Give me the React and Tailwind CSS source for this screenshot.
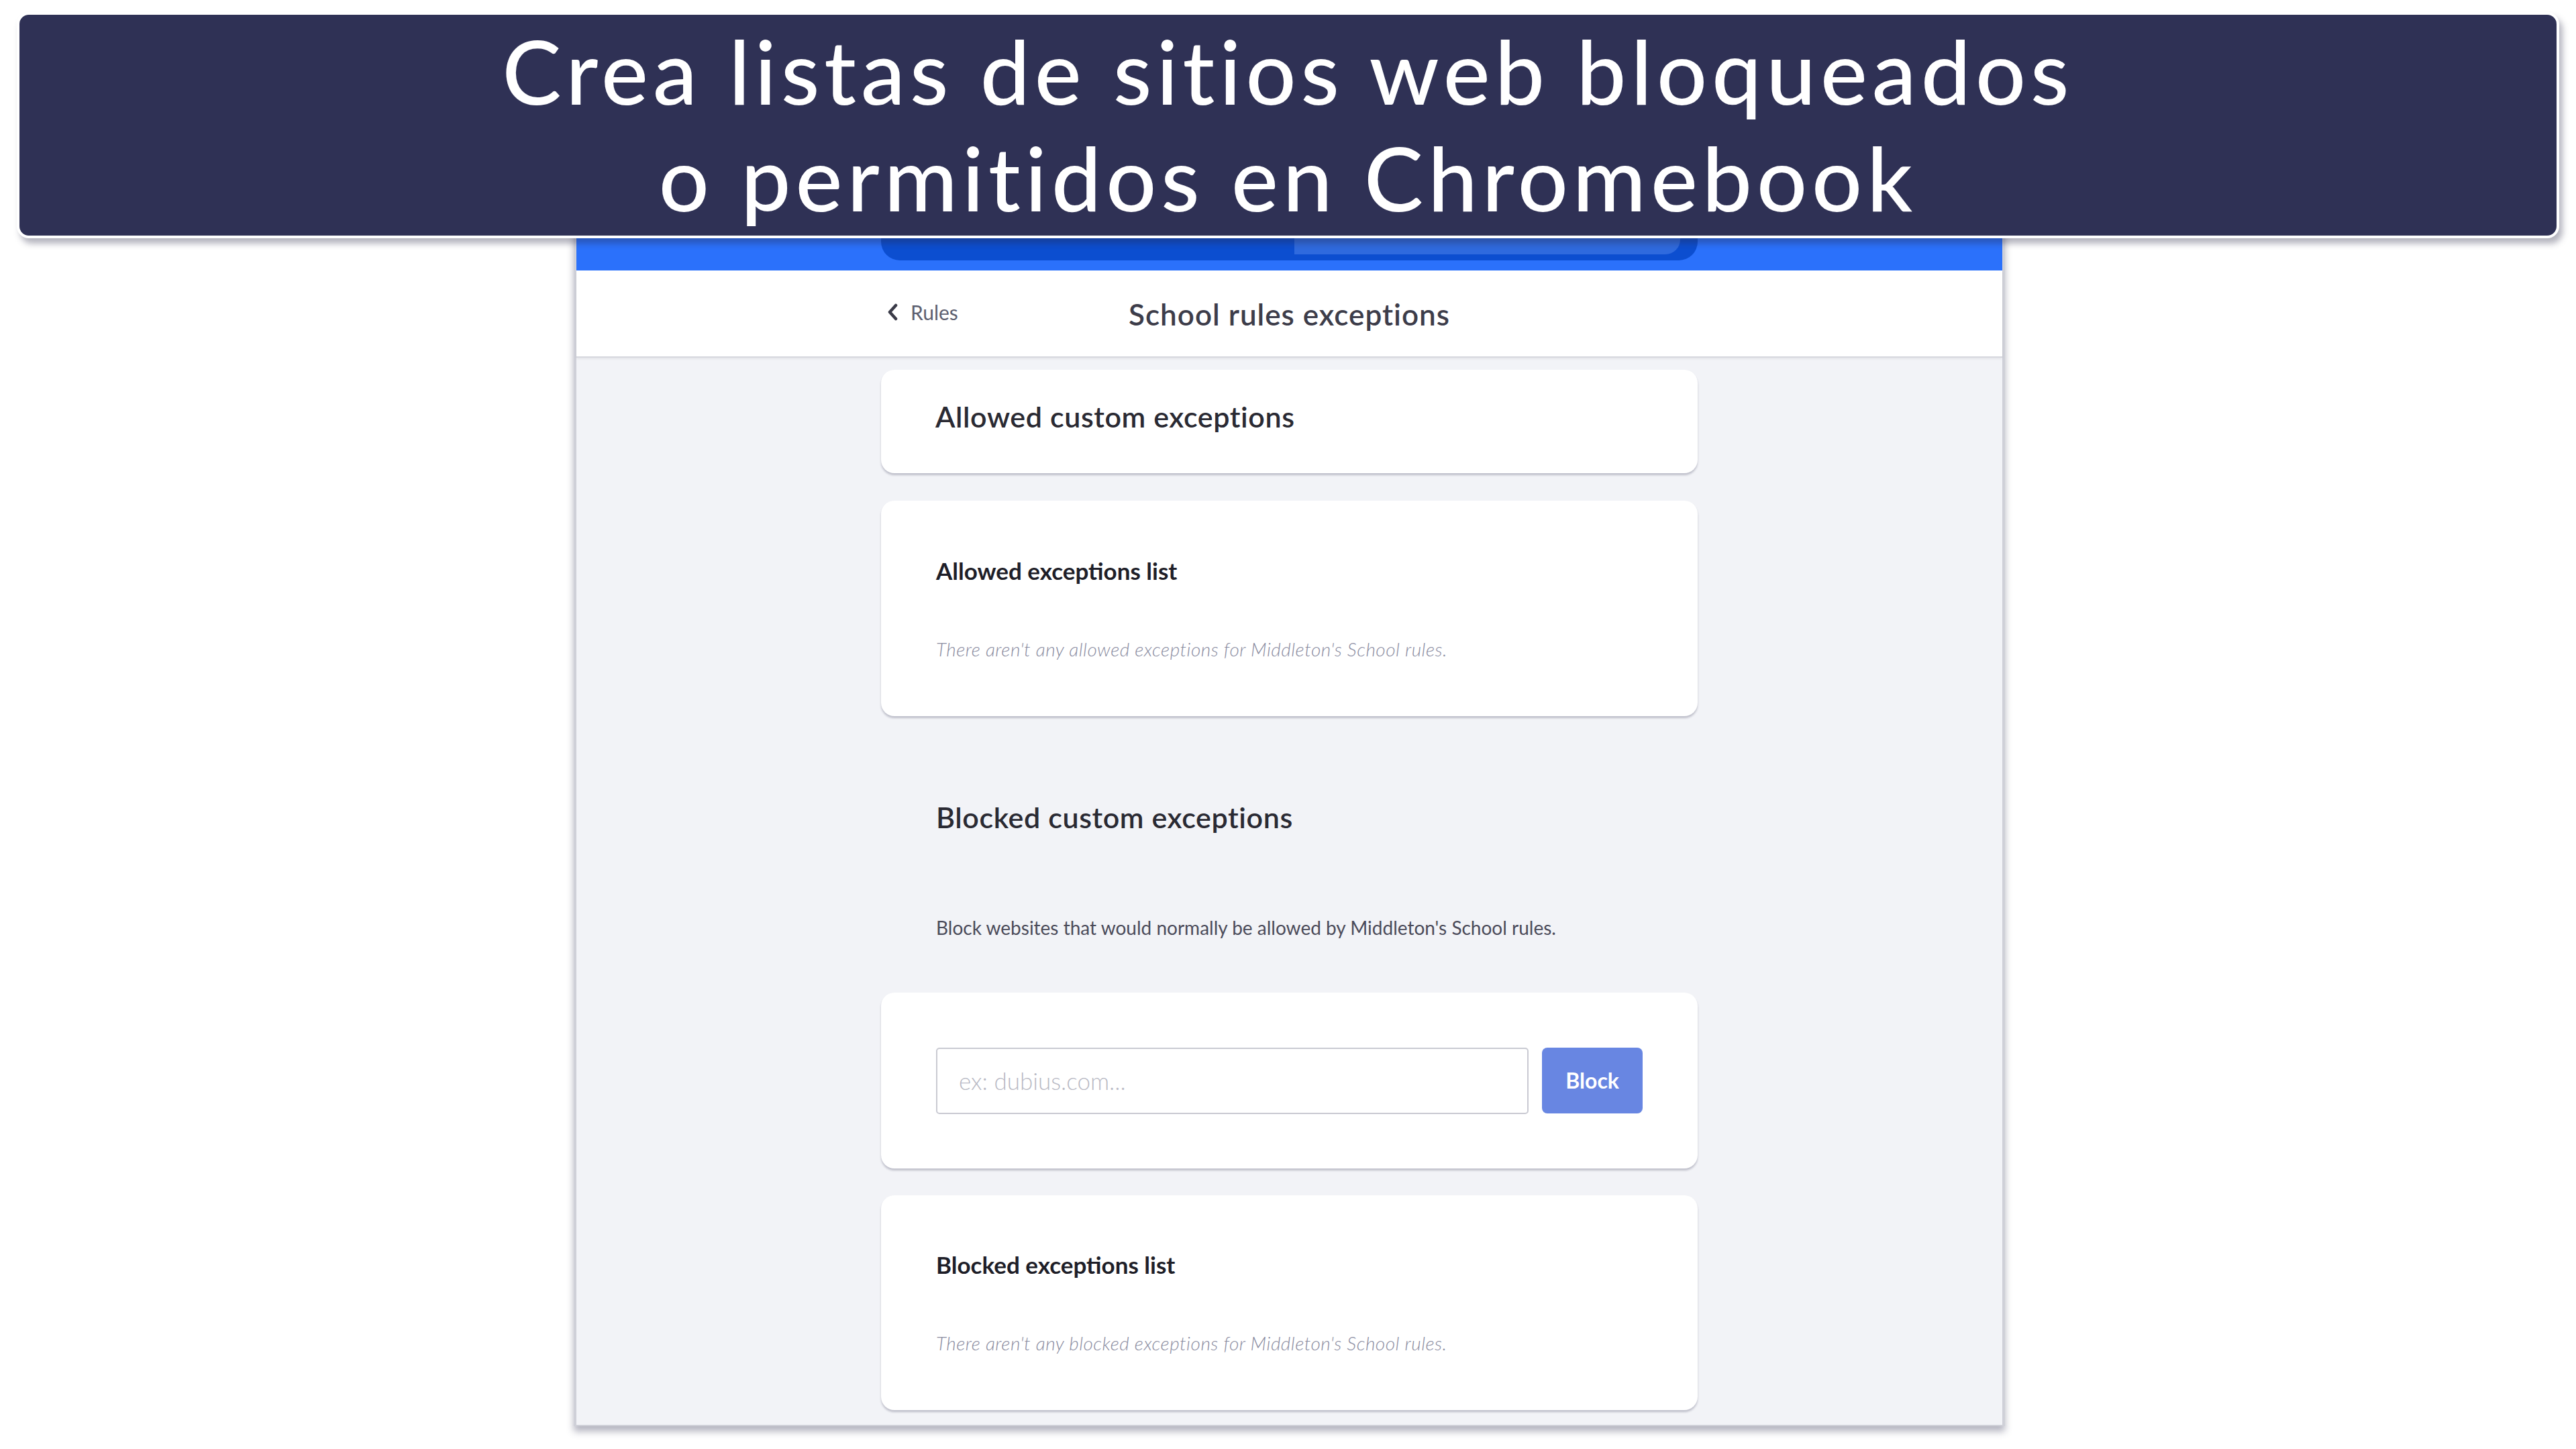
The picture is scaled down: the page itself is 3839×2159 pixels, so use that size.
import React from "react";

function Card({ className = "", children }) {
  return (
    <div className={"bg-white rounded-[20px] shadow-[0_3px_3px_rgba(60,60,90,0.28)] " + className}>
      {children}
    </div>
  );
}

export default function App() {
  return (
    <div className="w-[3839px] h-[2159px] bg-white overflow-hidden pt-[18px] font-['Lato','Noto_Sans',sans-serif]">
      {/* Banner */}
      <div className="relative z-10 mx-[25px] h-[337px] border-4 border-white rounded-[18px] bg-[#2f3155] shadow-[5px_8px_10px_rgba(40,40,70,0.35)] pt-[4px] text-center text-white text-[132px] leading-[159px] font-medium tracking-[7px]">
        <div>Crea listas de sitios web bloqueados</div>
        <div>o permitidos en Chromebook</div>
      </div>

      {/* App frame */}
      <div className="ml-[855px] -mt-[15px] w-[2133px] h-[1785px] border-x-4 border-b-2 border-[#cfd0d8] bg-[#f2f3f7] shadow-[0_8px_10px_rgba(70,70,100,0.4)] flex flex-col">
        {/* Blue bar */}
        <div className="h-[63px] bg-[#2b71fb] flex justify-center shrink-0">
          <div className="w-[1217px] h-[48px] bg-[#0c4ed0] rounded-b-[28px] flex">
            <div className="w-[616px]" />
            <div className="flex-1 bg-[#2f6ade] rounded-br-[22px] mb-[9px] mr-[26px]" />
          </div>
        </div>
        {/* Header */}
        <div className="h-[130px] bg-white border-b-2 border-[#d6d7de] shadow-[0_2px_3px_rgba(0,0,0,0.06)] flex justify-center shrink-0">
          <div className="w-[1217px] grid grid-cols-[1fr_auto_1fr] items-center">
            <div className="flex items-center gap-[18px] pl-[8px] text-[#5c5f70] text-[30px] leading-[30px] -mt-[4px]">
              <svg width="18" height="26" viewBox="0 0 18 26" className="shrink-0">
                <polyline points="14,3 5,13 14,23" fill="none" stroke="#3a3b48" strokeWidth="4.5" strokeLinecap="round" strokeLinejoin="round" />
              </svg>
              <span>Rules</span>
            </div>
            <div className="text-[44px] leading-[44px] font-semibold text-[#3d3d4a] tracking-[1px] pt-[2px]">School rules exceptions</div>
            <div />
          </div>
        </div>
        {/* Body */}
        <div className="flex-1 flex justify-center pt-[18px]">
          <div className="w-[1217px] flex flex-col">
            <Card className="h-[154px] pt-[48px] px-[81px]">
              <div className="text-[43px] leading-[43px] font-semibold text-[#2a2a33] tracking-[0.6px]">Allowed custom exceptions</div>
            </Card>

            <Card className="mt-[41px] h-[321px] pt-[87px] px-[82px]">
              <div className="text-[35px] leading-[35px] font-bold text-[#1e1e28]">Allowed exceptions list</div>
              <div className="mt-[85px] text-[28px] leading-[28px] italic font-light text-[#8a8c9f] tracking-[0.5px]">There aren't any allowed exceptions for Middleton's School rules.</div>
            </Card>

            <div className="mt-[129px] px-[82px]">
              <div className="text-[43px] leading-[43px] font-semibold text-[#2a2a33] tracking-[0.6px]">Blocked custom exceptions</div>
              <div className="mt-[129px] text-[28px] leading-[28px] text-[#4b4b5a]">Block websites that would normally be allowed by Middleton's School rules.</div>
            </div>

            <Card className="mt-[83px] h-[262px] px-[82px] flex items-center gap-[20px]">
              <div className="w-[885px] h-[99px] border-2 border-[#c9cad2] rounded-[5px] bg-white flex items-center pl-[32px] text-[35px] font-light text-[#b8b9c4]">
                ex: dubius.com...
              </div>
              <button className="w-[150px] h-[98px] rounded-[8px] bg-[#6886e2] text-white text-[32px] font-bold">Block</button>
            </Card>

            <Card className="mt-[40px] h-[320px] pt-[86px] px-[82px]">
              <div className="text-[35px] leading-[35px] font-bold text-[#1e1e28]">Blocked exceptions list</div>
              <div className="mt-[85px] text-[28px] leading-[28px] italic font-light text-[#8a8c9f] tracking-[0.5px]">There aren't any blocked exceptions for Middleton's School rules.</div>
            </Card>
          </div>
        </div>
      </div>
    </div>
  );
}
